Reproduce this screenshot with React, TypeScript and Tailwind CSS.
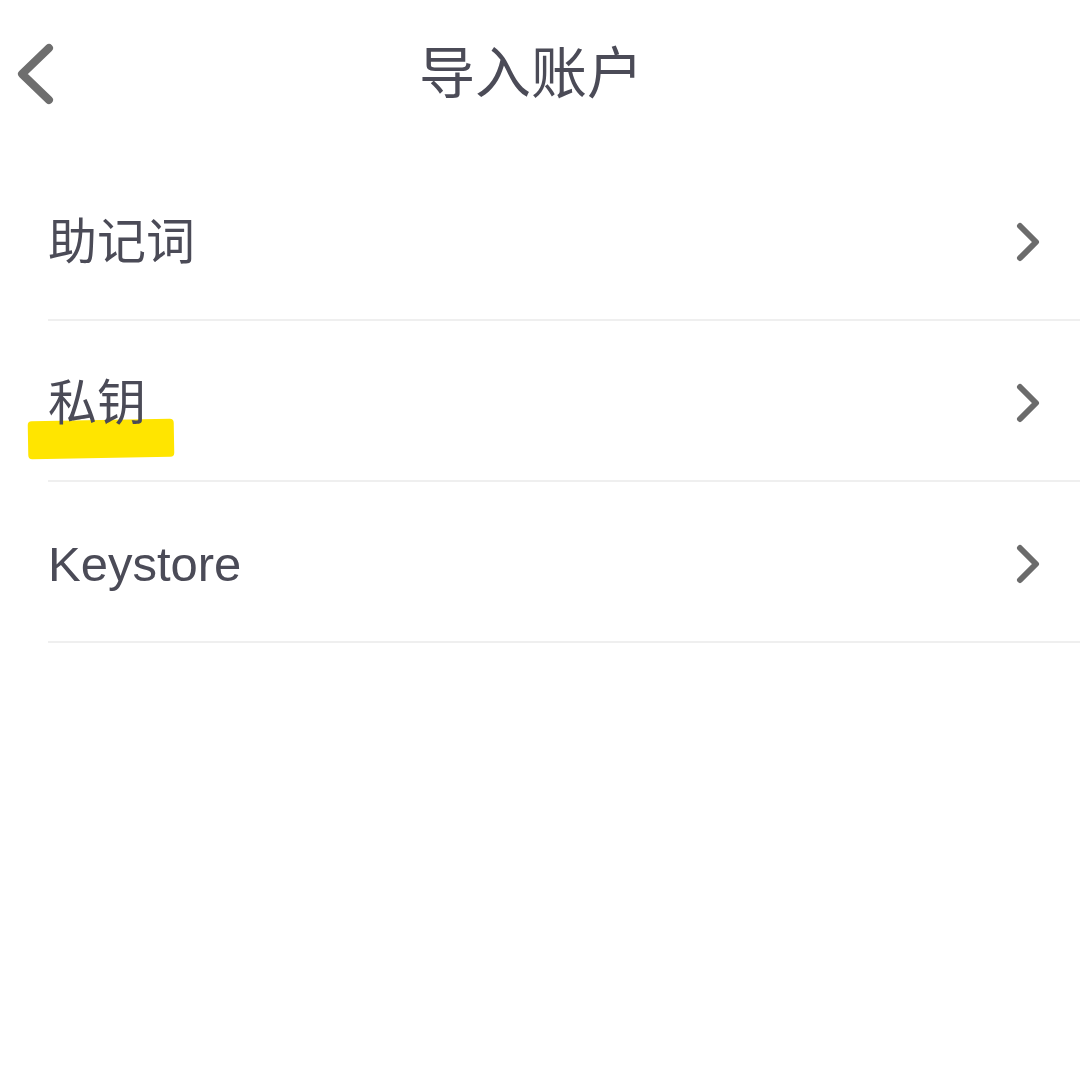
import React from "react";

const font = '"Liberation Sans", Arial, "Noto Sans CJK SC", sans-serif';

function Chevron() {
  return (
    <svg width="30" height="44" viewBox="0 0 30 44" fill="none">
      <path d="M7 6 L23 22 L7 38" stroke="#6b6b6b" strokeWidth="6" strokeLinecap="round" strokeLinejoin="round" />
    </svg>
  );
}

function Row({ label, children }: { label: string; children?: React.ReactNode }) {
  return (
    <div className="relative ml-[48px] flex h-[161px] items-center justify-between border-b-2 border-[#efefef] pr-[37px]">
      <span className="relative z-10 pt-[6px] text-[49px] text-[#4b4b57]" style={{ fontFamily: font }}>
        {label}
      </span>
      <div className="pt-[4px]">
        <Chevron />
      </div>
      {children}
    </div>
  );
}

export default function App() {
  return (
    <div className="h-[1080px] w-[1080px] overflow-hidden bg-white" style={{ fontFamily: font }}>
      <div className="relative flex h-[144px] items-center justify-center pr-[18px] pt-[4px]">
        <div className="absolute left-[12px] top-[42px]">
          <svg width="44" height="64" viewBox="0 0 44 64" fill="none">
            <path d="M37 6 L10 32 L37 58" stroke="#6e6e6e" strokeWidth="8" strokeLinecap="round" strokeLinejoin="round" />
          </svg>
        </div>
        <span className="text-[56px] text-[#4b4b57]">导入账户</span>
      </div>
      <div className="pt-[16px]">
        <Row label="助记词" />
        <Row label="私钥">
          <div className="absolute left-[-20px] top-[99px] h-[38px] w-[146px] -rotate-1 rounded-sm bg-[#ffe500]" />
        </Row>
        <Row label="Keystore" />
      </div>
    </div>
  );
}
